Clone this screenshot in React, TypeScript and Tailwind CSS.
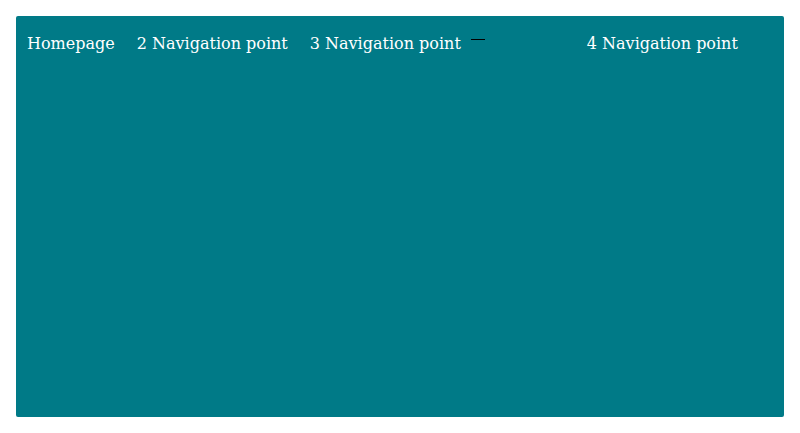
import React from "react";

export default function App() {
  return (
    <div className="w-[800px] h-[433px] bg-white p-4" style={{ fontFamily: '"DejaVu Serif", serif' }}>
      <div className="w-[768px] h-[401px] bg-[#007a87] rounded-[2px]">
        <nav className="flex items-start pt-[20px] pl-[11px] text-white text-[16px] leading-none">
          <span className="mr-[22px]">Homepage</span>
          <span className="mr-[22px]">2 Navigation point</span>
          <span>3 Navigation point</span>
          <span className="ml-[10px] mt-[3px] w-[14px] h-px bg-black" />
          <span className="ml-[102px]">4 Navigation point</span>
        </nav>
      </div>
    </div>
  );
}
